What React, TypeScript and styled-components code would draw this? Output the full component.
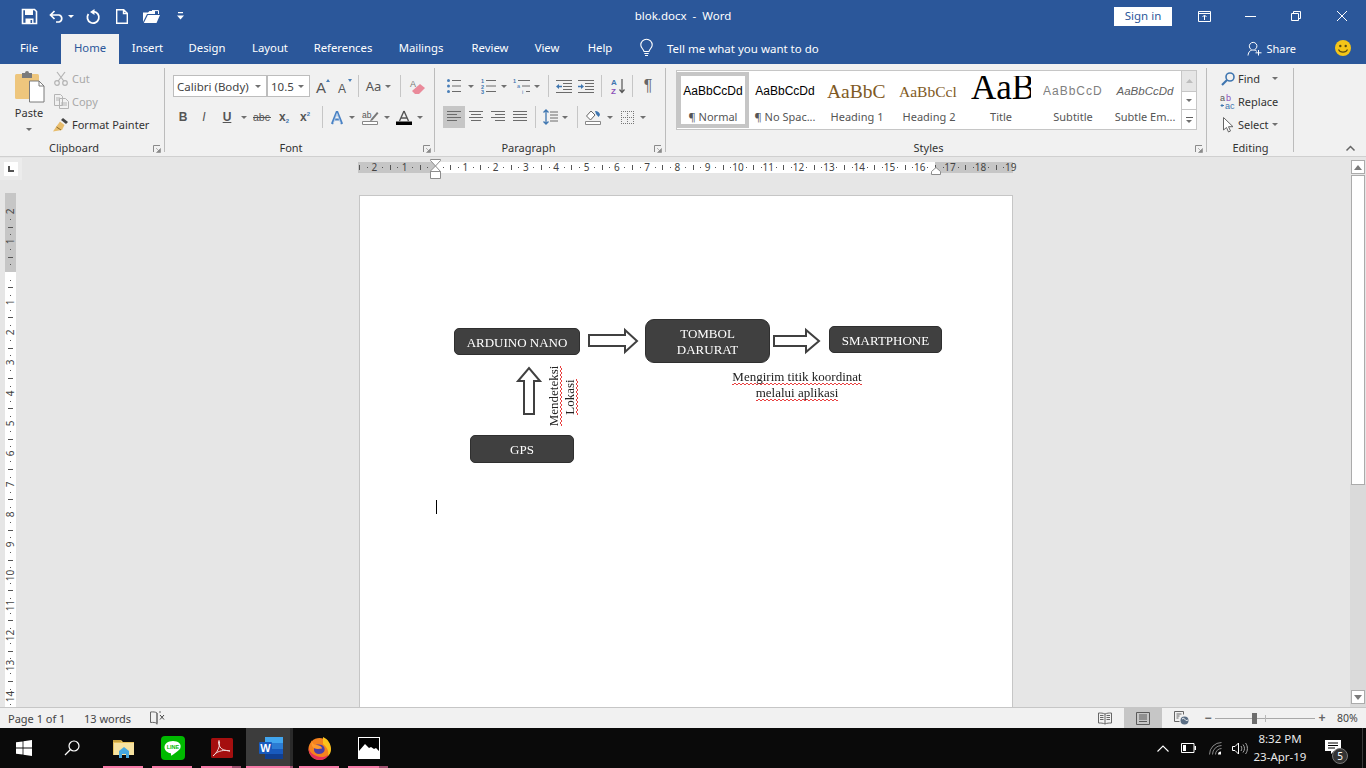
import React from 'react'
import styled, { createGlobalStyle } from 'styled-components'

const UI = `"Noto Sans", "Open Sans", sans-serif`
const SANS = '"Liberation Sans", sans-serif'
const BLUE = '#2b579a'
const UNIT = 30.3

const GlobalStyle = createGlobalStyle`
  html, body { margin: 0; padding: 0; height: 100%; overflow: hidden; }
  body { font-family: ${UI}; font-size: 11px; color: #444; }
  svg { display: block; flex: none; overflow: visible; }
`

const Caret = ({ c = '#707070' }: { c?: string }) => (
  <svg width="6" height="3" viewBox="0 0 6 3"><path d="M0 0h6L3 3z" fill={c} /></svg>
)

const ic = { fill: 'none', stroke: '#fff', strokeWidth: 1.4 }

const SaveIcon = () => (
  <svg width="15" height="15" viewBox="0 0 15 15">
    <path d="M.5.5h12l2 2v12H.5z" fill="none" stroke="#fff" strokeWidth="1.6" />
    <path d="M3 1h8v5H3zM3.5 9.5h8V15h-8z" fill="#fff" />
    <path d="M8.5 11h1.6v3H8.5z" fill={BLUE} />
  </svg>
)
const UndoIcon = () => (
  <svg width="15" height="13" viewBox="0 0 15 13">
    <path d="M5.5 1 1.5 5l4 4M1.5 5H10a3.6 3.6 0 0 1 0 7H7" {...ic} strokeWidth={1.7} />
  </svg>
)
const RepeatIcon = () => (
  <svg width="14" height="15" viewBox="0 0 14 15">
    <path d="M8 2.600A5.800 5.800 0 1 1 2.400 5" {...ic} strokeWidth={1.8} />
    <path d="M8.500 0v6L4 3z" fill="#fff" />
  </svg>
)
const NewIcon = () => (
  <svg width="12" height="15" viewBox="0 0 12 15"><path d="M.7.7h7l3.600 3.600v10H.7zM7.500.7v3.800h3.800" {...ic} /></svg>
)
const OpenIcon = () => (
  <svg width="17" height="13" viewBox="0 0 17 13">
    <path d="M0 2.500h5L6.500 1H12v3H4L0 12z" fill="#fff" />
    <path d="M4.800 5H17l-3.500 8H.8z" fill="#fff" />
    <path d="M9 .6h6.500V4" fill="none" stroke="#fff" />
  </svg>
)
const CustomizeIcon = () => (
  <svg width="7" height="8" viewBox="0 0 7 8"><path d="M1 0h5v1.300H1zM0 3.500h7L3.500 7.500z" fill="#fff" /></svg>
)
const BulbIcon = () => (
  <svg width="13" height="18" viewBox="0 0 13 18">
    <path d="M4 12.500C3.500 10 .8 9 .8 6a5.700 5.700 0 0 1 11.400 0c0 3-2.700 4-3.200 6.500zM4.300 14.500h4.400M5 16.500h3" {...ic} strokeWidth={1.1} />
  </svg>
)
const ShareIcon = () => (
  <svg width="15" height="16" viewBox="0 0 15 16">
    <path d="M1 15.500c.5-4 2.500-5.500 5-5.500 2 0 3 .6 4 1.500M7.500 9.700a3.800 3.800 0 1 0-3-.1" {...ic} strokeWidth={1} />
    <path d="M11.500 10v5.500M8.500 12.800h6" {...ic} strokeWidth={1} />
  </svg>
)
const SmileIcon = () => (
  <svg width="16" height="16" viewBox="0 0 16 16">
    <circle cx="8" cy="8" r="8" fill="#f4c518" />
    <circle cx="5.300" cy="6" r="1.200" fill="#5a4a10" /><circle cx="10.700" cy="6" r="1.200" fill="#5a4a10" />
    <path d="M3.500 9.500c1.500 3.500 7.500 3.500 9 0" fill="none" stroke="#5a4a10" strokeWidth="1.100" />
  </svg>
)
const RibbonDisplayIcon = () => (
  <svg width="13" height="11" viewBox="0 0 13 11">
    <path d="M.5.5h12v10H.5zM.5 2.500h12M6.500 9V4.500M4.500 6l2-2 2 2" fill="none" stroke="#fff" />
  </svg>
)
const RestoreIcon = () => (
  <svg width="10" height="10" viewBox="0 0 10 10"><path d="M.5 2.500h7v7h-7zM2.500 2.500v-2h7v7h-2" fill="none" stroke="#fff" /></svg>
)
const CloseIcon = () => (
  <svg width="10" height="10" viewBox="0 0 10 10"><path d="M0 0l10 10M10 0 0 10" stroke="#fff" /></svg>
)

const PasteIcon = () => (
  <svg width="29" height="31" viewBox="0 0 29 31">
    <rect x="0" y="3" width="24" height="25" rx="1.500" fill="#eec67d" />
    <path d="M7 2h3a2 2 0 0 1 4 0h3v5H7z" fill="#7b7b7b" />
    <path d="M14.500 10H24l5 5v16H14.500z" fill="#fff" stroke="#7b7b7b" />
    <path d="M24 10v5h5" fill="none" stroke="#7b7b7b" />
  </svg>
)
const CutIcon = () => (
  <svg width="14" height="15" viewBox="0 0 14 15">
    <g fill="none" stroke="#b4b4b4" strokeWidth="1.200">
      <circle cx="3" cy="12" r="2.300" /><circle cx="11" cy="12" r="2.300" />
      <path d="M4.200 10 11 1M9.800 10 3 1" />
    </g>
  </svg>
)
const CopyIcon = () => (
  <svg width="15" height="15" viewBox="0 0 15 15">
    <path d="M.5.5h6l2 2v9H.5zM5.500 4.500h6l3 3v7h-9zM2 4h4M2 6h3M7 9h6M7 11h6" fill="#f1f1f1" stroke="#b4b4b4" />
  </svg>
)
const PainterIcon = () => (
  <svg width="16" height="15" viewBox="0 0 16 15">
    <path d="M10 1l5 4-2 2-5-4z" fill="#444" />
    <path d="M7 4.500l4.500 3.500L9 13 0 14.500 3 10z" fill="#e8bd6d" />
    <path d="M3.500 10l4.500 3" stroke="#8a6a2a" fill="none" />
  </svg>
)
const GrowFont = ({ up, size }: { up: boolean; size: number }) => (
  <svg width="15" height="16" viewBox="0 0 15 16">
    <text x="0" y="15" fontFamily={SANS} fontSize={size} fill="#555">A</text>
    <path d={up ? 'M10 4l2-3 2 3z' : 'M10 1h4l-2 3z'} fill="#4a7fb8" />
  </svg>
)
const EraserIcon = () => (
  <svg width="15" height="15" viewBox="0 0 15 15">
    <path d="M2 12l8-7 5 4-6 6H5z" fill="#ea8a9a" />
    <text x="0" y="8" fontFamily={SANS} fontSize="9" fill="#777">A</text>
  </svg>
)
const StrikeIcon = () => (
  <svg width="18" height="12" viewBox="0 0 18 12">
    <text x="0" y="10" fontFamily={SANS} fontSize="10.500" fill="#555">abc</text>
    <path d="M0 6.500h18" stroke="#555" />
  </svg>
)
const TextEffect = () => (
  <svg width="14" height="15" viewBox="0 0 14 15">
    <path d="M7 1.500 2 14M7 1.500 12 14M4 9.500h6" fill="none" stroke="#4a82c4" strokeWidth="2.200" />
    <path d="M7 3.500 3.500 13M7 3.500l3.500 9.500" fill="none" stroke="#dbe8f6" strokeWidth=".7" />
  </svg>
)
const HighlightIcon = () => (
  <svg width="17" height="15" viewBox="0 0 17 15">
    <text x="0" y="8" fontFamily={SANS} fontSize="8.500" fill="#555">ab</text>
    <path d="M9 9l6-7 1.500 1.200-6 7-2.500 1z" fill="#777" />
    <path d="M.5 11.500h15v3H.5z" fill="#fff" stroke="#888" />
  </svg>
)
const FontColor = () => (
  <svg width="16" height="15" viewBox="0 0 16 15">
    <path d="M8 1 3.500 11M8 1l4.500 10M5 8h6" fill="none" stroke="#555" strokeWidth="1.400" />
    <path d="M0 11.500h16V15H0z" fill="#000" />
  </svg>
)
const Launcher = () => (
  <svg width="8" height="8" viewBox="0 0 8 8">
    <path d="M.5 7V.5H7" fill="none" stroke="#8a8a8a" />
    <path d="M3 3l3.500 3.500M7.500 3.500v4h-4z" stroke="#8a8a8a" fill="#8a8a8a" strokeWidth=".6" />
  </svg>
)

const Lines = ({ rows }: { rows: [number, number][] }) => (
  <svg width="14" height="14" viewBox="0 0 14 14">
    {rows.map(([a, b], i) => (
      <path key={i} d={`M${a} ${1.5 + i * 3}H${b}`} stroke="#6b6b6b" />
    ))}
  </svg>
)
const BulletsIcon = () => (
  <svg width="14" height="14" viewBox="0 0 14 14">
    {[1.5, 7, 12.5].map(y => (
      <g key={y}><circle cx="1.500" cy={y} r="1.500" fill="#4a7fb8" /><path d={`M5 ${y}h9`} stroke="#6b6b6b" /></g>
    ))}
  </svg>
)
const NumberedIcon = () => (
  <svg width="15" height="16" viewBox="0 0 15 16">
    {['1', '2', '3'].map((n, i) => (
      <g key={n}>
        <text x="0" y={5 + i * 5.5} fontSize="5.500" fontFamily={SANS} fontWeight="bold" fill="#3f76b0">{n}</text>
        <path d={`M5 ${2.5 + i * 5.5}h10`} stroke="#6b6b6b" />
      </g>
    ))}
  </svg>
)
const MultiIcon = () => (
  <svg width="17" height="16" viewBox="0 0 17 16">
    <text x="0" y="5" fontSize="5.500" fontFamily={SANS} fontWeight="bold" fill="#3f76b0">1</text>
    <text x="4" y="10" fontSize="5.500" fontFamily={SANS} fill="#3f76b0">a</text>
    <text x="9" y="15.500" fontSize="5.500" fontFamily={SANS} fill="#3f76b0">i</text>
    <path d="M5 2.500h12M9 8h8M13 13.500h4" stroke="#6b6b6b" />
  </svg>
)
const IndentIcon = ({ dir }: { dir: 'in' | 'out' }) => (
  <svg width="16" height="13" viewBox="0 0 16 13">
    <path d="M0 .5h16M7 3.500h9M7 6.500h9M7 9.500h9M0 12.500h16" stroke="#6b6b6b" />
    <path d={dir === 'out' ? 'M0 6.500 3 4v1.800h3v1.500H3V9z' : 'M6 6.500 3 4v1.800H0v1.500h3V9z'} fill="#3f76b0" />
  </svg>
)
const SortIcon = () => (
  <svg width="14" height="16" viewBox="0 0 14 16">
    <text x="0" y="7" fontSize="8" fontWeight="bold" fontFamily={SANS} fill="#3f76b0">A</text>
    <text x="0" y="15.500" fontSize="8" fontWeight="bold" fontFamily={SANS} fill="#8b4fb8">Z</text>
    <path d="M11 1v13M8.500 11.500 11 14.500l2.500-3" fill="none" stroke="#555" strokeWidth="1.200" />
  </svg>
)
const SpacingIcon = () => (
  <svg width="15" height="16" viewBox="0 0 15 16">
    <path d="M3 1v14M.5 3.500 3 1l2.500 2.500M.5 12.500 3 15l2.500-2.500" fill="none" stroke="#3f76b0" strokeWidth="1.300" />
    <path d="M7 3h8M7 6h8M7 9h8M7 12h8" stroke="#6b6b6b" />
  </svg>
)
const ShadingIcon = () => (
  <svg width="16" height="15" viewBox="0 0 16 15">
    <path d="M6 1 1.500 6l4 4L10 5z" fill="#fff" stroke="#666" />
    <path d="M10 1c3 0 5 2 5 4l-1.500 2L11 4z" fill="#3f76b0" />
    <path d="M.5 11.500h15v3H.5z" fill="#fff" stroke="#888" />
  </svg>
)
const BordersIcon = () => (
  <svg width="13" height="13" viewBox="0 0 13 13">
    <path d="M0 .5h13M0 6.500h13M0 12.500h13M.5 0v13M6.500 0v13M12.500 0v13" fill="none" stroke="#777" strokeDasharray="1 1" />
  </svg>
)
const FindIcon = () => (
  <svg width="14" height="14" viewBox="0 0 14 14">
    <circle cx="9" cy="5" r="4" fill="none" stroke="#3f76b0" strokeWidth="1.600" />
    <path d="M6 8 1 13" stroke="#3f76b0" strokeWidth="2.200" />
  </svg>
)
const ReplaceIcon = () => (
  <svg width="17" height="15" viewBox="0 0 17 15">
    <text x="0" y="7" fontSize="9" fontFamily={SANS} fill="#555">a</text>
    <text x="6" y="7" fontSize="9" fontFamily={SANS} fill="#8b4fb8">b</text>
    <text x="5" y="15" fontSize="9" fontFamily={SANS} fill="#3f76b0">ac</text>
    <path d="M1 11.500h3M1 11.500l1.500-1.500M1 11.500 2.500 13" fill="none" stroke="#3f76b0" />
  </svg>
)
const SelectIcon = () => (
  <svg width="11" height="16" viewBox="0 0 11 16">
    <path d="M.5.5v12.500l3-2.500 2 4.500 2-1-2-4.300h4.500z" fill="#fff" stroke="#666" />
  </svg>
)
const CollapseIcon = () => (
  <svg width="9" height="6" viewBox="0 0 9 6"><path d="M.5 5.500l4-4 4 4" fill="none" stroke="#666" strokeWidth="1.500" /></svg>
)
const ProofIcon = () => (
  <svg width="15" height="14" viewBox="0 0 15 14">
    <path d="M7 2C5.500.8 3 .8.500 1v10.500c2.500-.2 5-.2 6.500 1zM7 2v10.500M7 13.500v-1M9 1h2" fill="none" stroke="#666" />
    <path d="M10 4l4 4.500M14 4l-4 4.500" stroke="#444" />
  </svg>
)
const ReadIcon = () => (
  <svg width="14" height="13" viewBox="0 0 14 13">
    <path d="M7 2C5 1 3 1 .5 1v10c2.500 0 4.500 0 6.500 1 2-1 4-1 6.500-1V1C11 1 9 1 7 2zM7 2v10M2 3.500h3.500M2 5.500h3.500M2 7.500h3.500M8.500 3.500H12M8.500 5.500H12M8.500 7.500H12" fill="none" stroke="#666" />
  </svg>
)
const PrintIcon = () => (
  <svg width="14" height="13" viewBox="0 0 14 13">
    <path d="M.5.5h13v12H.5zM3 3h8M3 5h8M3 7h8M3 9.500h8" fill="none" stroke="#5a5a5a" />
  </svg>
)
const WebIcon = () => (
  <svg width="15" height="14" viewBox="0 0 15 14">
    <path d="M.5.500h9v3M.5.500v10h5M2.500 3h5M2.500 5h3M2.500 7h2" fill="none" stroke="#666" />
    <circle cx="10.500" cy="9.500" r="4" fill="#5a6e84" />
    <path d="M8 8c1.500-1 2-1 3 .5s2 1 3 .5" stroke="#fff" fill="none" />
  </svg>
)

const WindowsLogo = () => (
  <svg width="16" height="16" viewBox="0 0 16 16">
    <path d="M0 2.300 6.600 1.400v6.200H0zM7.400 1.300 16 0v7.600H7.400zM0 8.400h6.600v6.200L0 13.700zM7.400 8.400H16V16l-8.600-1.200z" fill="#fff" />
  </svg>
)
const SearchIcon = () => (
  <svg width="16" height="16" viewBox="0 0 16 16">
    <circle cx="10" cy="6" r="5" fill="none" stroke="#fff" strokeWidth="1.200" />
    <path d="M6.500 9.500 1 15" stroke="#fff" strokeWidth="1.300" />
  </svg>
)
const ExplorerIcon = () => (
  <svg width="22" height="19" viewBox="0 0 22 19">
    <path d="M0 1h8l2 2h11v13H0z" fill="#e7c15c" />
    <path d="M1 4h20v12H1z" fill="#f6e2a0" />
    <path d="M0 1h8v2H0z" fill="#c9a33f" />
    <path d="M6 12l5-4 5 4v7h-3v-4H9v4H6z" fill="#45a7e0" />
  </svg>
)
const LineIcon = () => (
  <svg width="24" height="24" viewBox="0 0 24 24">
    <rect width="24" height="24" rx="4" fill="#00b900" />
    <path d="M12 5c-5 0-8.500 2.800-8.500 6.300 0 3 2.600 5.400 6.200 5.900.6.200.3 1.300.2 2 0 .3.300.4.700.2 2-1.200 4.500-2.800 6.500-4.600 1.500-1.300 2.400-2.200 2.400-3.500C20.500 7.800 17 5 12 5z" fill="#fff" />
    <text x="12" y="13" textAnchor="middle" fontSize="5.500" fontWeight="bold" fontFamily={SANS} fill="#00b900">LINE</text>
  </svg>
)
const AcrobatIcon = () => (
  <svg width="22" height="20" viewBox="0 0 22 20">
    <rect width="22" height="20" rx="1.500" fill="#a50f0f" />
    <path d="M2 18c3-2 5-6 6-9 .5-2 1-6 0-6.500-1 .5-.5 4 1 6.500 2 3 5 3.500 10 4-4-1-9-1-14 2-1 .6-2 2-3 3z" fill="none" stroke="#f3d8d8" strokeWidth="1" />
  </svg>
)
const WordIcon = () => (
  <svg width="24" height="22" viewBox="0 0 24 22">
    <path d="M6 0h18v6H6z" fill="#41a5ee" /><path d="M6 6h18v6H6z" fill="#2b7cd3" />
    <path d="M6 12h18v5H6z" fill="#185abd" /><path d="M6 17h18v5H6z" fill="#103f91" />
    <rect x="0" y="5" width="13" height="12" rx="1" fill="#185abd" />
    <text x="6.500" y="15" textAnchor="middle" fontSize="11" fontWeight="bold" fontFamily={SANS} fill="#fff">W</text>
  </svg>
)
const FirefoxIcon = () => (
  <svg width="23" height="23" viewBox="0 0 23 23">
    <circle cx="11.500" cy="12" r="11" fill="#f5821f" />
    <path d="M15 0c5 2 8 7 8 12 0 3-1 5-3 7 1-4 0-8-5-12z" fill="#fcc31c" />
    <path d="M6 9c3-2 8-2 10 1 2 4-1 7-5 7-3 0-5-2-5-4z" fill="#4a3fa8" />
    <path d="M3 3c1 3 3 5 6 5 3 .5 5 1.500 5 3.500l-4 .5c-3 0-5-1-6-3z" fill="#ff9a2e" />
    <path d="M.5 11c0 7 5 12 11 12 4 0 7-2 9-5-3 2-8 3-12 1-4-1.500-7-4-8-8z" fill="#e5305c" />
  </svg>
)
const PhotosIcon = () => (
  <svg width="22" height="22" viewBox="0 0 22 22">
    <rect x=".5" y=".5" width="21" height="21" fill="#000" stroke="#fff" />
    <path d="M1 21V14l6-7 4 4 2-1 3 2 2-1 3 3v7z" fill="#fff" />
  </svg>
)
const BatteryIcon = () => (
  <svg width="15" height="10" viewBox="0 0 15 10">
    <path d="M.5.5H13v9H.5z" fill="none" stroke="#fff" /><path d="M13.500 3H15v4h-1.500z" fill="#fff" /><path d="M2 2h3v6H2z" fill="#fff" />
  </svg>
)
const TrayUp = () => (
  <svg width="12" height="7" viewBox="0 0 12 7"><path d="M.5 6.500 6 1l5.500 5.500" fill="none" stroke="#fff" strokeWidth="1.100" /></svg>
)
const WifiIcon = () => (
  <svg width="13" height="13" viewBox="0 0 13 13">
    <g fill="none" stroke="#8a8a8a"><path d="M.5 12.500A12 12 0 0 1 12.500.5" /><path d="M3.500 12.500a9 9 0 0 1 9-9" /><path d="M6.500 12.500a6 6 0 0 1 6-6" /></g>
    <path d="M9 12.500a3 3 0 0 1 3-3v3z" fill="#fff" />
  </svg>
)
const SpeakerIcon = () => (
  <svg width="16" height="13" viewBox="0 0 16 13">
    <path d="M.5 4.500H3L6.500 1v11L3 8.500H.5z" fill="none" stroke="#fff" />
    <path d="M9 4c1 1.500 1 3.500 0 5M11 2.500c2 2.500 2 5.500 0 8M13.500 1c2.500 3 2.500 8 0 11" fill="none" stroke="#aaa" />
  </svg>
)
const NotifyIcon = () => (
  <svg width="16" height="14" viewBox="0 0 16 14"><path d="M0 0h16v11H9l-3 3v-3H0z" fill="#fff" /><path d="M3 3h10M3 5.500h10M3 8h7" stroke="#000" /></svg>
)

const RightArrow = ({ w, h, top, bot, base }: { w: number; h: number; top: number; bot: number; base: number }) => (
  <svg width={w} height={h} viewBox={`0 0 ${w} ${h}`}>
    <path
      d={`M1 ${top}H${base}V1L${w - 1} ${h / 2}L${base} ${h - 1}V${bot}H1Z`}
      fill="#fff"
      stroke="#404040"
      strokeWidth="2"
    />
  </svg>
)
const UpArrow = () => (
  <svg width="24" height="48" viewBox="0 0 24 48">
    <path d="M7 47V14H1L12 1 23 14H17V47Z" fill="#fff" stroke="#404040" strokeWidth="2" />
  </svg>
)

const inches = (from: number, to: number) => {
  const out: number[] = []
  for (let i = from; i <= to; i++) out.push(i)
  return out
}

const HRuler = () => (
  <HRulerBar>
    <RulerShade style={{ left: 0, width: 77 }} />
    <RulerShade style={{ left: 577, width: 78 }} />
    {inches(-2, 19).map(n => {
      const x = 77 + n * UNIT
      return (
        <React.Fragment key={n}>
          {n !== 0 && <HNum style={{ left: x - 10 }}>{Math.abs(n)}</HNum>}
          {n < 19 && (
            <>
              <HDot style={{ left: x + UNIT * 0.25 }} />
              <HTick style={{ left: x + UNIT * 0.5 }} />
              <HDot style={{ left: x + UNIT * 0.75 }} />
            </>
          )}
        </React.Fragment>
      )
    })}
    <HTick style={{ left: 77 - 2.5 * UNIT }} />
    <HDot style={{ left: 77 - 2.25 * UNIT }} />
    <IndentMark>
      <svg width="11" height="20" viewBox="0 0 11 20">
        <path d="M.5.5h10v1L5.500 7l5 5.500H.5V12l5-5-5-5.500zM.5 12.500h10v7H.5z" fill="#fff" stroke="#8c8c8c" />
      </svg>
    </IndentMark>
    <RightMark>
      <svg width="10" height="8" viewBox="0 0 10 8"><path d="M.5 7.500v-3L5 .5l4.500 4v3z" fill="#fff" stroke="#8c8c8c" /></svg>
    </RightMark>
  </HRulerBar>
)

const VRuler = () => (
  <VRulerBar>
    <VShade />
    {inches(-2, 14).map(n => {
      const y = 79 + n * UNIT
      return (
        <React.Fragment key={n}>
          {n !== 0 && <VNum style={{ top: y - 10 }}><span>{Math.abs(n)}</span></VNum>}
          <VDot style={{ top: y + UNIT * 0.25 }} />
          <VTick style={{ top: y + UNIT * 0.5 }} />
          <VDot style={{ top: y + UNIT * 0.75 }} />
        </React.Fragment>
      )
    })}
  </VRulerBar>
)

const tabs: [string, number][] = [
  ['Insert', 57], ['Design', 62], ['Layout', 64], ['References', 82],
  ['Mailings', 74], ['Review', 64], ['View', 50], ['Help', 56],
]

export default function App() {
  return (
    <Page>
      <GlobalStyle />
      <TitleBar>
        <Qat>
          <QatBtn $w={30}><SaveIcon /></QatBtn>
          <QatBtn $w={35}><UndoIcon /><Caret c="#fff" /></QatBtn>
          <QatBtn $w={28}><RepeatIcon /></QatBtn>
          <QatBtn $w={30}><NewIcon /></QatBtn>
          <QatBtn $w={28}><OpenIcon /></QatBtn>
          <QatBtn $w={30}><CustomizeIcon /></QatBtn>
        </Qat>
        <DocTitle>blok.docx&nbsp; -&nbsp; Word</DocTitle>
        <WindowControls>
          <SignIn>Sign in</SignIn>
          <WinBtn><RibbonDisplayIcon /></WinBtn>
          <WinBtn><MinimizeLine /></WinBtn>
          <WinBtn><RestoreIcon /></WinBtn>
          <WinBtn><CloseIcon /></WinBtn>
        </WindowControls>
      </TitleBar>

      <TabBar>
        <Tab $w={58}>File</Tab>
        <ActiveTab>Home</ActiveTab>
        {tabs.map(([t, w]) => <Tab key={t} $w={w}>{t}</Tab>)}
        <TellMe><BulbIcon /><span>Tell me what you want to do</span></TellMe>
        <Share><ShareIcon /><span>Share</span></Share>
        <Smile><SmileIcon /></Smile>
      </TabBar>

      <Ribbon>
        <Group $w={165} $top={3}>
          <ClipBody>
            <PasteCol>
              <PasteIcon />
              <span>Paste</span>
              <Caret />
            </PasteCol>
            <SmallCol>
              <SmallBtn $off><IconSlot $w={18}><CutIcon /></IconSlot>Cut</SmallBtn>
              <SmallBtn $off><IconSlot $w={18}><CopyIcon /></IconSlot>Copy</SmallBtn>
              <SmallBtn><IconSlot $w={18} $shift={-1}><PainterIcon /></IconSlot>Format Painter</SmallBtn>
            </SmallCol>
          </ClipBody>
          <GroupLabel $pad={17}>Clipboard</GroupLabel>
          <Launch><Launcher /></Launch>
        </Group>

        <Group $w={270} $pad={8}>
          <ToolRow>
            <FontSelect $w={94}>Calibri (Body)<Caret /></FontSelect>
            <FontSelect $w={43}>10.5<Caret /></FontSelect>
            <Tool $w={26}><GrowFont up size={15} /></Tool>
            <Tool $w={18}><GrowFont up={false} size={12} /></Tool>
            <Sep $x={4} />
            <Tool $w={21}><AaText>Aa</AaText></Tool>
            <Tool $w={8}><Caret /></Tool>
            <Sep $x={8} />
            <Tool $w={16}><EraserIcon /></Tool>
          </ToolRow>
          <ToolRow>
            <Tool $w={20}><FormatLetter $b>B</FormatLetter></Tool>
            <Tool $w={22}><FormatLetter $i>I</FormatLetter></Tool>
            <Tool $w={24}><FormatLetter $b $u>U</FormatLetter></Tool>
            <Tool $w={10}><Caret /></Tool>
            <Tool $w={26}><StrikeIcon /></Tool>
            <Tool $w={18}><FormatLetter $b>x<Sub>2</Sub></FormatLetter></Tool>
            <Tool $w={24}><FormatLetter $b>x<Sup>2</Sup></FormatLetter></Tool>
            <Sep $x={5} />
            <Tool $w={18}><TextEffect /></Tool>
            <Tool $w={12}><Caret /></Tool>
            <Tool $w={24}><HighlightIcon /></Tool>
            <Tool $w={10}><Caret /></Tool>
            <Tool $w={24}><FontColor /></Tool>
            <Tool $w={8}><Caret /></Tool>
          </ToolRow>
          <GroupLabel $pad={18}>Font</GroupLabel>
          <Launch><Launcher /></Launch>
        </Group>

        <Group $w={231} $pad={9}>
          <ToolRow>
            <Tool $w={19}><BulletsIcon /></Tool>
            <Tool $w={16}><Caret /></Tool>
            <Tool $w={18}><NumberedIcon /></Tool>
            <Tool $w={14}><Caret /></Tool>
            <Tool $w={21}><MultiIcon /></Tool>
            <Tool $w={10}><Caret /></Tool>
            <Sep $x={6} />
            <Tool $w={18}><IndentIcon dir="out" /></Tool>
            <Tool $w={26}><IndentIcon dir="in" /></Tool>
            <Sep $x={2} />
            <Tool $w={28}><SortIcon /></Tool>
            <Sep $x={0} />
            <Tool $w={30}><Pilcrow>¶</Pilcrow></Tool>
          </ToolRow>
          <ToolRow>
            <ActiveTool><Lines rows={[[0, 14], [0, 10], [0, 14], [0, 10]]} /></ActiveTool>
            <Tool $w={22}><Lines rows={[[0, 14], [2, 12], [0, 14], [2, 12]]} /></Tool>
            <Tool $w={22}><Lines rows={[[0, 14], [4, 14], [0, 14], [4, 14]]} /></Tool>
            <Tool $w={22}><Lines rows={[[0, 14], [0, 14], [0, 14], [0, 14]]} /></Tool>
            <Sep $x={4} />
            <Tool $w={21}><SpacingIcon /></Tool>
            <Tool $w={8}><Caret /></Tool>
            <Sep $x={8} />
            <Tool $w={14}><ShadingIcon /></Tool>
            <Tool $w={20}><Caret /></Tool>
            <Tool $w={14}><BordersIcon /></Tool>
            <Tool $w={18}><Caret /></Tool>
          </ToolRow>
          <GroupLabel $pad={44}>Paragraph</GroupLabel>
          <Launch><Launcher /></Launch>
        </Group>

        <Group $w={541} $pad={10} $top={6}>
          <Gallery>
            <StyleCell $on><SampleBody>AaBbCcDd</SampleBody><StyleName>¶ Normal</StyleName></StyleCell>
            <StyleCell><SampleBody>AaBbCcDd</SampleBody><StyleName>¶ No Spac...</StyleName></StyleCell>
            <StyleCell><SampleH1>AaBbC</SampleH1><StyleName>Heading 1</StyleName></StyleCell>
            <StyleCell><SampleH2>AaBbCcl</SampleH2><StyleName>Heading 2</StyleName></StyleCell>
            <StyleCell><SampleTitle>AaB</SampleTitle><StyleName>Title</StyleName></StyleCell>
            <StyleCell><SampleSub>AaBbCcD</SampleSub><StyleName>Subtitle</StyleName></StyleCell>
            <StyleCell><SampleEm>AaBbCcDd</SampleEm><StyleName>Subtle Em...</StyleName></StyleCell>
            <GalleryScroll>
              <GalleryBtn $grey $h={21}><svg width="7" height="4" viewBox="0 0 7 4"><path d="M0 4h7L3.500 0z" fill="#bdbdbd" /></svg></GalleryBtn>
              <GalleryBtn $h={19}><Caret /></GalleryBtn>
              <GalleryBtn $h={19} $col><MoreBar /><Caret /></GalleryBtn>
            </GalleryScroll>
          </Gallery>
          <GroupLabel $pad={16}>Styles</GroupLabel>
          <Launch><Launcher /></Launch>
        </Group>

        <Group $w={87} $top={3} $pad={7}>
          <SmallCol>
            <SmallBtn><IconSlot $w={20} $mid><FindIcon /></IconSlot>Find<FindCaret><Caret /></FindCaret></SmallBtn>
            <SmallBtn><IconSlot $w={20} $mid><ReplaceIcon /></IconSlot>Replace</SmallBtn>
            <SmallBtn><IconSlot $w={20} $mid><SelectIcon /></IconSlot>Select<SelectCaret><Caret /></SelectCaret></SmallBtn>
          </SmallCol>
          <GroupLabel>Editing</GroupLabel>
        </Group>

        <Collapse><CollapseIcon /></Collapse>
      </Ribbon>

      <Workspace>
        <Corner><CornerBox><CornerGlyph /></CornerBox></Corner>
        <RulerCell><HRuler /></RulerCell>
        <VRulerCell><VRuler /></VRulerCell>
        <PageCell>
          <Sheet>
            <Canvas>
              <Node $x={94} $y={133} $w={126} $h={27} $r={5}>ARDUINO NANO</Node>
              <Node $x={285} $y={124} $w={125} $h={44} $r={9}>TOMBOL<br />DARURAT</Node>
              <Node $x={469} $y={131} $w={113} $h={27} $r={5}>SMARTPHONE</Node>
              <Node $x={110} $y={240} $w={104} $h={28} $r={5}>GPS</Node>
              <Shape $x={228} $y={134}><RightArrow w={50} h={24} top={6} bot={17} base={37} /></Shape>
              <Shape $x={413} $y={134}><RightArrow w={47} h={24} top={7} bot={17} base={33} /></Shape>
              <Shape $x={157} $y={172}><UpArrow /></Shape>
              <TurnedNote $x={194} $y={201}><Squiggle>Mendeteksi</Squiggle></TurnedNote>
              <TurnedNote $x={210} $y={202}><Squiggle>Lokasi</Squiggle></TurnedNote>
              <Caption>
                <Squiggle>Mengirim titik koordinat</Squiggle><br />
                <Squiggle>melalui aplikasi</Squiggle>
              </Caption>
            </Canvas>
            <TextCursor />
          </Sheet>
        </PageCell>
        <ScrollBar>
          <ScrollBtn><svg width="8" height="5" viewBox="0 0 8 5"><path d="M0 5h8L4 0z" fill="#7a7a7a" /></svg></ScrollBtn>
          <Thumb />
          <ScrollBtn $end><svg width="8" height="5" viewBox="0 0 8 5"><path d="M0 0h8L4 5z" fill="#7a7a7a" /></svg></ScrollBtn>
        </ScrollBar>
      </Workspace>

      <StatusBar>
        <StatusText $w={76}>Page 1 of 1</StatusText>
        <StatusText $w={66}>13 words</StatusText>
        <ProofIcon />
        <StatusRight>
          <ViewBtn><ReadIcon /></ViewBtn>
          <ViewBtn $on><PrintIcon /></ViewBtn>
          <ViewBtn><WebIcon /></ViewBtn>
          <Zoom>
            <ZoomSign>−</ZoomSign>
            <ZoomTrack><ZoomMid /><ZoomThumb /></ZoomTrack>
            <ZoomSign>+</ZoomSign>
          </Zoom>
          <ZoomValue>80%</ZoomValue>
        </StatusRight>
      </StatusBar>

      <Taskbar>
        <TaskLeft>
          <TaskSlot $w={48}><WindowsLogo /></TaskSlot>
          <TaskSlot $w={48}><SearchIcon /></TaskSlot>
          <AppSlot $first><ExplorerIcon /></AppSlot>
          <AppSlot><LineIcon /></AppSlot>
          <AppSlot $tail><AcrobatIcon /></AppSlot>
          <ActiveApp><WordIcon /></ActiveApp>
          <AppSlot><FirefoxIcon /></AppSlot>
          <AppSlot $tail><PhotosIcon /></AppSlot>
        </TaskLeft>
        <Tray>
          <TraySlot $w={26}><TrayUp /></TraySlot>
          <TraySlot $w={24}><BatteryIcon /></TraySlot>
          <TraySlot $w={30}><WifiIcon /></TraySlot>
          <TraySlot $w={20}><SpeakerIcon /></TraySlot>
          <Clock><span>8:32 PM</span><span>23-Apr-19</span></Clock>
          <Notify><NotifyIcon /><Badge>5</Badge></Notify>
          <ShowDesktop />
        </Tray>
      </Taskbar>
    </Page>
  )
}

const Page = styled.div`
  width: 1366px;
  height: 768px;
  display: flex;
  flex-direction: column;
  overflow: hidden;
  background: #e6e6e6;
`

const TitleBar = styled.div`
  height: 32px;
  flex: none;
  display: grid;
  grid-template-columns: 1fr auto 1fr;
  align-items: center;
  background: ${BLUE};
  color: #fff;
`

const Qat = styled.div`
  display: flex;
  align-items: center;
  padding-left: 14px;
`

const QatBtn = styled.div<{ $w: number }>`
  width: ${p => p.$w}px;
  display: flex;
  align-items: center;
  justify-content: center;
  gap: 4px;
`

const DocTitle = styled.div`
  margin-bottom: 2px;
  font-size: 11.5px;
  color: #fff;
  white-space: nowrap;
`

const WindowControls = styled.div`
  display: flex;
  align-items: center;
  justify-content: flex-end;
  padding-right: 1px;
`

const SignIn = styled.div`
  width: 58px;
  height: 19px;
  margin-right: 9px;
  background: #fff;
  color: ${BLUE};
  font-size: 11.5px;
  line-height: 18px;
  text-align: center;
`

const WinBtn = styled.div`
  width: 46px;
  height: 32px;
  display: flex;
  align-items: center;
  justify-content: center;
`

const MinimizeLine = styled.div`
  width: 11px;
  height: 1px;
  background: #fff;
`

const TabBar = styled.div`
  height: 32px;
  flex: none;
  display: flex;
  align-items: flex-end;
  background: ${BLUE};
  color: #fff;
  font-size: 11.5px;
`

const Tab = styled.div<{ $w: number }>`
  width: ${p => p.$w}px;
  height: 30px;
  font-size: 11.3px;
  line-height: 28px;
  text-align: center;
  white-space: nowrap;

  &:first-child {
    margin-right: 3px;
  }
`

const ActiveTab = styled.div`
  width: 58px;
  height: 30px;
  font-size: 11.3px;
  line-height: 28px;
  text-align: center;
  background: #f1f1f1;
  color: ${BLUE};
`

const TellMe = styled.div`
  height: 30px;
  box-sizing: border-box;
  padding-bottom: 2px;
  margin-left: 12px;
  display: flex;
  align-items: center;
  gap: 14px;
  white-space: nowrap;
`

const Share = styled.div`
  height: 30px;
  box-sizing: border-box;
  padding-bottom: 2px;
  margin-left: auto;
  display: flex;
  align-items: center;
  gap: 4px;
  font-size: 11px;
`

const Smile = styled.div`
  height: 30px;
  width: 16px;
  box-sizing: border-box;
  padding-bottom: 2px;
  margin: 0 15px 0 39px;
  display: flex;
  align-items: center;
`

const Ribbon = styled.div`
  height: 92px;
  flex: none;
  display: flex;
  position: relative;
  background: #f1f1f1;
  border-bottom: 1px solid #d0d0d0;
  box-sizing: content-box;
  color: #444;
`

const Group = styled.div<{ $w: number; $pad?: number; $top?: number }>`
  width: ${p => p.$w}px;
  box-sizing: border-box;
  padding: ${p => p.$top ?? 11}px 0 0 ${p => p.$pad ?? 0}px;
  position: relative;
  display: flex;
  flex-direction: column;
  gap: 9px;

  &::after {
    content: '';
    position: absolute;
    right: 0;
    top: 4px;
    bottom: 4px;
    width: 1px;
    background: #bcbcbc;
  }
`

const GroupLabel = styled.div<{ $pad?: number }>`
  position: absolute;
  left: 0;
  right: 0;
  bottom: 0;
  height: 16px;
  line-height: 16px;
  text-align: center;
  font-size: 11px;
  color: #333;
  padding-right: ${p => p.$pad ?? 0}px;
`

const Launch = styled.div`
  position: absolute;
  right: 4px;
  bottom: 3px;
`

const ClipBody = styled.div`
  display: flex;
  padding-left: 8px;
`

const PasteCol = styled.div`
  width: 42px;
  display: flex;
  flex-direction: column;
  align-items: center;
  padding-top: 4px;
  color: #333;

  span {
    margin: 3px 0 7px;
    line-height: 16px;
  }
`

const SmallCol = styled.div`
  display: flex;
  flex-direction: column;
  padding-left: 4px;
`

const SmallBtn = styled.div<{ $off?: boolean }>`
  height: 23px;
  display: flex;
  align-items: center;
  white-space: nowrap;
  position: relative;
  color: ${p => (p.$off ? '#a8a8a8' : '#333')};
`

const IconSlot = styled.div<{ $w: number; $mid?: boolean; $shift?: number }>`
  width: ${p => p.$w}px;
  display: flex;
  align-items: center;
  justify-content: ${p => (p.$mid ? 'center' : 'flex-start')};

  svg {
    margin-left: ${p => p.$shift ?? 0}px;
  }
`

const FindCaret = styled.div`
  margin-left: 12px;
`

const SelectCaret = styled.div`
  margin-left: 3px;
`

const ToolRow = styled.div`
  height: 22px;
  display: flex;
  align-items: center;
`

const Tool = styled.div<{ $w: number }>`
  width: ${p => p.$w}px;
  height: 22px;
  flex: none;
  display: flex;
  align-items: center;
  justify-content: center;
`

const ActiveTool = styled.div`
  width: 22px;
  height: 22px;
  flex: none;
  margin-left: -1px;
  display: flex;
  align-items: center;
  justify-content: center;
  background: #c6c6c6;
`

const Sep = styled.div<{ $x: number }>`
  width: 1px;
  height: 22px;
  flex: none;
  margin: 0 ${p => p.$x}px;
  background: #c6c6c6;
`

const FontSelect = styled.div<{ $w: number }>`
  width: ${p => p.$w}px;
  height: 22px;
  box-sizing: border-box;
  flex: none;
  padding: 0 5px 0 3px;
  display: flex;
  align-items: center;
  justify-content: space-between;
  background: #fff;
  border: 1px solid #bdbdbd;
  font-size: 11.5px;
  color: #444;
  white-space: nowrap;
`

const AaText = styled.span`
  font: 13px ${UI};
  color: #555;
`

const FormatLetter = styled.span<{ $b?: boolean; $i?: boolean; $u?: boolean }>`
  font-family: ${SANS};
  font-size: 12px;
  font-weight: ${p => (p.$b ? 'bold' : 'normal')};
  font-style: ${p => (p.$i ? 'italic' : 'normal')};
  text-decoration: ${p => (p.$u ? 'underline' : 'none')};
  color: #555;
`

const Sub = styled.sub`
  font-size: 6px;
  color: #3f76b0;
  vertical-align: -2px;
`

const Sup = styled.sup`
  font-size: 6px;
  color: #3f76b0;
  vertical-align: 5px;
`

const Pilcrow = styled.span`
  font: 16px ${SANS};
  color: #666;
`

const Gallery = styled.div`
  width: 521px;
  height: 60px;
  box-sizing: border-box;
  display: flex;
  background: #fff;
  border: 1px solid #c6c6c6;
`

const StyleCell = styled.div<{ $on?: boolean }>`
  width: 72px;
  height: 56px;
  margin-top: 1px;
  box-sizing: border-box;
  flex: none;
  padding: 0 4px;
  display: flex;
  flex-direction: column;
  align-items: center;
  border: 4px solid ${p => (p.$on ? '#c6c6c6' : 'transparent')};
`

const SampleBody = styled.div`
  height: 30px;
  flex: none;
  margin: 0 -4px;
  font: 12px/30px ${SANS};
  color: #000;
  white-space: nowrap;
`

const SampleH1 = styled.div`
  width: 60px;
  height: 30px;
  flex: none;
  overflow: hidden;
  font: 19.5px/32px "Liberation Serif", serif;
  color: #7f5a24;
  white-space: nowrap;
`

const SampleH2 = styled(SampleH1)`
  font-size: 15.5px;
`

const SampleTitle = styled.div`
  width: 60px;
  height: 30px;
  flex: none;
  overflow: hidden;
  font: 35px/24px "Liberation Serif", serif;
  color: #000;
  white-space: nowrap;
`

const SampleSub = styled.div`
  width: 60px;
  height: 30px;
  flex: none;
  overflow: hidden;
  font: 12px/31px ${SANS};
  letter-spacing: 1px;
  color: #7f7f7f;
  white-space: nowrap;
`

const SampleEm = styled.div`
  height: 30px;
  flex: none;
  margin: 0 -4px;
  font: italic 11.5px/30px ${SANS};
  color: #5f5f5f;
  white-space: nowrap;
`

const StyleName = styled.div`
  margin: 2px -8px 0;
  line-height: 18px;
  font-size: 11px;
  color: #555;
  white-space: nowrap;
`

const GalleryScroll = styled.div`
  width: 15px;
  margin-left: auto;
  display: flex;
  flex-direction: column;
  border-left: 1px solid #c6c6c6;
`

const GalleryBtn = styled.div<{ $h: number; $grey?: boolean; $col?: boolean }>`
  height: ${p => p.$h}px;
  box-sizing: border-box;
  display: flex;
  flex-direction: ${p => (p.$col ? 'column' : 'row')};
  align-items: center;
  justify-content: center;
  gap: 2px;
  background: ${p => (p.$grey ? '#e6e6e6' : '#fff')};
  border-bottom: 1px solid #c6c6c6;

  &:last-child {
    border-bottom: 0;
  }
`

const MoreBar = styled.div`
  width: 7px;
  height: 1px;
  background: #606060;
`

const Collapse = styled.div`
  position: absolute;
  right: 11px;
  bottom: 5px;
`

const Workspace = styled.div`
  flex: 1;
  min-height: 0;
  display: grid;
  grid-template-columns: 22px 1fr 16px;
  grid-template-rows: 36px 1fr;
  background: #e6e6e6;
`

const Corner = styled.div`
  padding: 1px 0 0 0;
`

const CornerBox = styled.div`
  width: 22px;
  height: 22px;
  box-sizing: border-box;
  padding: 4px;
  background: #ececec;
`

const CornerGlyph = styled.div`
  width: 14px;
  height: 14px;
  box-sizing: border-box;
  background: #fff;
  position: relative;

  &::after {
    content: '';
    position: absolute;
    left: 4px;
    top: 4px;
    width: 6px;
    height: 6px;
    box-sizing: border-box;
    border-left: 2px solid #555;
    border-bottom: 2px solid #555;
  }
`

const RulerCell = styled.div`
  padding: 5px 0 0 336px;
`

const HRulerBar = styled.div`
  width: 655px;
  height: 11px;
  position: relative;
  background: #fff;
`

const RulerShade = styled.div`
  position: absolute;
  top: 0;
  bottom: 0;
  background: #c6c6c6;
`

const HNum = styled.span`
  position: absolute;
  top: -1px;
  width: 20px;
  text-align: center;
  font: 10px/12px "Noto Sans", sans-serif;
  color: #444;
`

const HDot = styled.i`
  position: absolute;
  top: 5px;
  width: 1px;
  height: 1px;
  background: #555;
`

const HTick = styled.i`
  position: absolute;
  top: 3px;
  width: 1px;
  height: 5px;
  background: #555;
`

const IndentMark = styled.div`
  position: absolute;
  left: 72px;
  top: -3px;
`

const RightMark = styled.div`
  position: absolute;
  left: 573px;
  top: 5px;
`

const VRulerCell = styled.div`
  padding: 0 0 0 5px;
  overflow: hidden;
`

const VRulerBar = styled.div`
  width: 11px;
  height: 100%;
  position: relative;
  overflow: hidden;
  background: #fff;
`

const VShade = styled.div`
  position: absolute;
  left: 0;
  right: 0;
  top: 0;
  height: 79px;
  background: #c6c6c6;
`

const VNum = styled.span`
  position: absolute;
  left: 0;
  width: 11px;
  height: 20px;
  display: flex;
  align-items: center;
  justify-content: center;
  font: 10px/11px "Noto Sans", sans-serif;
  color: #444;

  span {
    display: block;
    transform: rotate(-90deg);
  }
`

const VDot = styled.i`
  position: absolute;
  left: 5px;
  width: 1px;
  height: 1px;
  background: #555;
`

const VTick = styled.i`
  position: absolute;
  left: 3px;
  width: 5px;
  height: 1px;
  background: #555;
`

const PageCell = styled.div`
  padding: 2px 0 0 337px;
  overflow: hidden;
  min-height: 0;
`

const Sheet = styled.div`
  width: 654px;
  height: 900px;
  box-sizing: border-box;
  background: #fff;
  border: 1px solid #c6c6c6;
  position: relative;
`

const Canvas = styled.div`
  position: absolute;
  inset: -1px 0 0 0;
  font-family: "Liberation Serif", serif;
  filter: blur(0.3px);
`

const Node = styled.div<{ $x: number; $y: number; $w: number; $h: number; $r: number }>`
  position: absolute;
  left: ${p => p.$x}px;
  top: ${p => p.$y}px;
  width: ${p => p.$w}px;
  height: ${p => p.$h}px;
  box-sizing: border-box;
  padding-top: 2px;
  display: flex;
  align-items: center;
  justify-content: center;
  text-align: center;
  background: #404040;
  border: 1.5px solid #2f2f2f;
  border-radius: ${p => p.$r}px;
  color: #fff;
  font-size: 13px;
  line-height: 16px;
`

const Shape = styled.div<{ $x: number; $y: number }>`
  position: absolute;
  left: ${p => p.$x}px;
  top: ${p => p.$y}px;
`

// Word's spell-check squiggle is finer than a wavy text-decoration can be drawn
const Squiggle = styled.span`
  color: #222;
  font-size: 13px;
  padding-bottom: 1px;
  background-image:
    repeating-linear-gradient(90deg, #e84040 0 2px, transparent 2px 4px),
    repeating-linear-gradient(90deg, transparent 0 2px, #e84040 2px 4px);
  background-size: 100% 1px, 100% 1px;
  background-position: 0 100%, 0 calc(100% - 1px);
  background-repeat: no-repeat;
`

const TurnedNote = styled.div<{ $x: number; $y: number }>`
  position: absolute;
  left: ${p => p.$x - 40}px;
  top: ${p => p.$y - 8}px;
  width: 80px;
  height: 16px;
  line-height: 16px;
  text-align: center;
  white-space: nowrap;
  transform: rotate(-90deg);
  transform-origin: center;
`

const Caption = styled.div`
  position: absolute;
  left: 357px;
  top: 174px;
  width: 160px;
  text-align: center;
  line-height: 16px;
  font-size: 13px;
`

const TextCursor = styled.div`
  position: absolute;
  left: 76px;
  top: 304px;
  width: 1px;
  height: 14px;
  background: #000;
`

const ScrollBar = styled.div`
  grid-column: 3;
  grid-row: 1 / span 2;
  display: flex;
  flex-direction: column;
  align-items: flex-start;
  padding: 3px 0 3px 1px;
  gap: 1px;
  position: relative;
  background: linear-gradient(#e6e6e6 0 327px, #dadada 327px);
`

const ScrollBtn = styled.div<{ $end?: boolean }>`
  width: 14px;
  height: 14px;
  box-sizing: border-box;
  flex: none;
  margin-top: ${p => (p.$end ? 'auto' : '0')};
  display: flex;
  align-items: center;
  justify-content: center;
  background: #fff;
  border: 1px solid #ababab;
`

const Thumb = styled.div`
  width: 14px;
  height: 310px;
  box-sizing: border-box;
  flex: none;
  background: #fff;
  border: 1px solid #ababab;
`

const StatusBar = styled.div`
  height: 21px;
  flex: none;
  box-sizing: border-box;
  display: flex;
  align-items: center;
  padding-left: 8px;
  background: #f1f1f1;
  border-top: 1px solid #c6c6c6;
`

const StatusText = styled.div<{ $w: number }>`
  width: ${p => p.$w}px;
  font-size: 11px;
  color: #444;
  white-space: nowrap;
`

const StatusRight = styled.div`
  margin-left: auto;
  height: 100%;
  display: flex;
  align-items: center;
`

const ViewBtn = styled.div<{ $on?: boolean }>`
  width: 38px;
  height: 100%;
  display: flex;
  align-items: center;
  justify-content: center;
  background: ${p => (p.$on ? '#c6c6c6' : 'transparent')};
`

const Zoom = styled.div`
  margin-left: 2px;
  display: flex;
  align-items: center;
  gap: 1px;
`

const ZoomSign = styled.span`
  width: 12px;
  text-align: center;
  font: bold 12px/12px ${SANS};
  color: #666;
`

const ZoomTrack = styled.div`
  width: 100px;
  height: 1px;
  position: relative;
  background: #a8a8a8;
`

const ZoomMid = styled.i`
  position: absolute;
  left: 50px;
  top: -3px;
  width: 1px;
  height: 7px;
  background: #b8b8b8;
`

const ZoomThumb = styled.i`
  position: absolute;
  left: 37px;
  top: -5px;
  width: 5px;
  height: 11px;
  background: #6d6d6d;
`

const ZoomValue = styled.div`
  width: 29px;
  margin-left: 9px;
  font-size: 10.5px;
  color: #444;
`

const Taskbar = styled.div`
  height: 40px;
  flex: none;
  display: flex;
  align-items: stretch;
  justify-content: space-between;
  background: #0a0a0a;
  color: #fff;
`

const TaskLeft = styled.div`
  display: flex;
`

const TaskSlot = styled.div<{ $w: number }>`
  width: ${p => p.$w}px;
  display: flex;
  align-items: center;
  justify-content: center;
`

const AppSlot = styled.div<{ $first?: boolean; $tail?: boolean }>`
  width: 49px;
  margin-left: ${p => (p.$first ? '3px' : '0')};
  position: relative;
  display: flex;
  align-items: center;
  justify-content: center;

  &::after {
    content: '';
    position: absolute;
    left: 4px;
    bottom: 0;
    width: 40px;
    height: 2px;
    background: ${p => (p.$tail
      ? 'linear-gradient(90deg, #f87aa8 0 78%, #a05070 78%)'
      : '#f87aa8')};
  }
`

const ActiveApp = styled.div`
  width: 49px;
  position: relative;
  display: flex;
  align-items: center;
  justify-content: center;
  background: linear-gradient(90deg, #3c3c3c 0 44px, #2a2a2a 44px 47px, transparent 47px);

  &::after {
    content: '';
    position: absolute;
    left: 0;
    bottom: 0;
    width: 47px;
    height: 2px;
    background: linear-gradient(90deg, #f87aa8 0 44px, #a05070 44px);
  }
`

const Tray = styled.div`
  display: flex;
  align-items: center;
`

const TraySlot = styled.div<{ $w: number }>`
  width: ${p => p.$w}px;
  display: flex;
  align-items: center;
  justify-content: center;
`

const Clock = styled.div`
  width: 60px;
  display: flex;
  flex-direction: column;
  align-items: center;
  font-size: 11.5px;
  line-height: 18px;
  color: #e8e8e8;
  white-space: nowrap;
`

const Notify = styled.div`
  width: 46px;
  height: 40px;
  position: relative;
  display: flex;
  align-items: center;
  justify-content: center;
  padding-bottom: 2px;
  box-sizing: border-box;
`

const Badge = styled.div`
  position: absolute;
  left: 22px;
  top: 20px;
  width: 16px;
  height: 16px;
  box-sizing: border-box;
  border: 1px solid #777;
  border-radius: 50%;
  background: #333;
  font-size: 10px;
  line-height: 14px;
  text-align: center;
  color: #fff;
`

const ShowDesktop = styled.div`
  width: 1px;
  height: 100%;
  margin: 0 3px 0 6px;
  background: #3a3a3a;
`
